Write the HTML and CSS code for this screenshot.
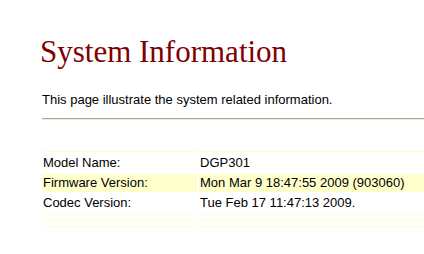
FILE: index.html
```html
<!DOCTYPE html>
<html lang="en">
<head>
  <meta charset="UTF-8" />
  <title>System Information</title>
  <link rel="stylesheet" href="styles.css">
</head>
<body>
  <div class="content">
    <h1>System Information</h1>
    <p class="intro">This page illustrate the system related information.</p>
    <hr class="divider" />

    <table class="info">
      <tr class="line"><td></td><td></td></tr>
      <tr>
        <td class="label">Model Name:</td>
        <td>DGP301</td>
      </tr>
      <tr class="alt">
        <td class="label">Firmware Version:</td>
        <td>Mon Mar 9 18:47:55 2009 (903060)</td>
      </tr>
      <tr>
        <td class="label">Codec Version:</td>
        <td>Tue Feb 17 11:47:13 2009.</td>
      </tr>
      <tr class="line tall"><td></td><td></td></tr>
      <tr class="line tall"><td></td><td></td></tr>
      <tr class="line"><td></td><td></td></tr>
    </table>
  </div>
</body>
</html>
```

FILE: styles.css
```css
html, body {
  margin: 0;
  background: #fff;
  overflow: hidden;
}
body {
  font-family: 'Liberation Sans', Arial, sans-serif;
  font-size: 13px;
  color: #000;
}

.content {
  padding: 35px 0 0 42px;
}

h1 {
  font-family: 'Liberation Serif', 'Times New Roman', serif;
  font-weight: normal;
  font-size: 31px;
  line-height: 34px;
  color: #800000;
  margin: 0 0 0 -2px;
}

.intro {
  margin: 23px 0 0;
  line-height: 15px;
}

.divider {
  border: none;
  border-top: 1px solid #aca899;
  border-bottom: 1px solid #ece9d8;
  height: 0;
  margin: 11px 0 0;
}

.info {
  border-collapse: separate;
  border-spacing: 2px;
  margin: 29px 0 0 -2px;
  width: calc(100% + 4px);
}
.info td {
  padding: 0 1px;
  height: 18px;
  line-height: 18px;
  white-space: nowrap;
}
.info td.label {
  width: 153px;
}
.info tr.alt td {
  background: #ffffcc;
}
.info tr.line td {
  height: 0;
  padding: 0;
  border-top: 1px solid #ffffcc;
  line-height: 0;
}
.info tr.line.tall td {
  padding-bottom: 3px;
}
```
